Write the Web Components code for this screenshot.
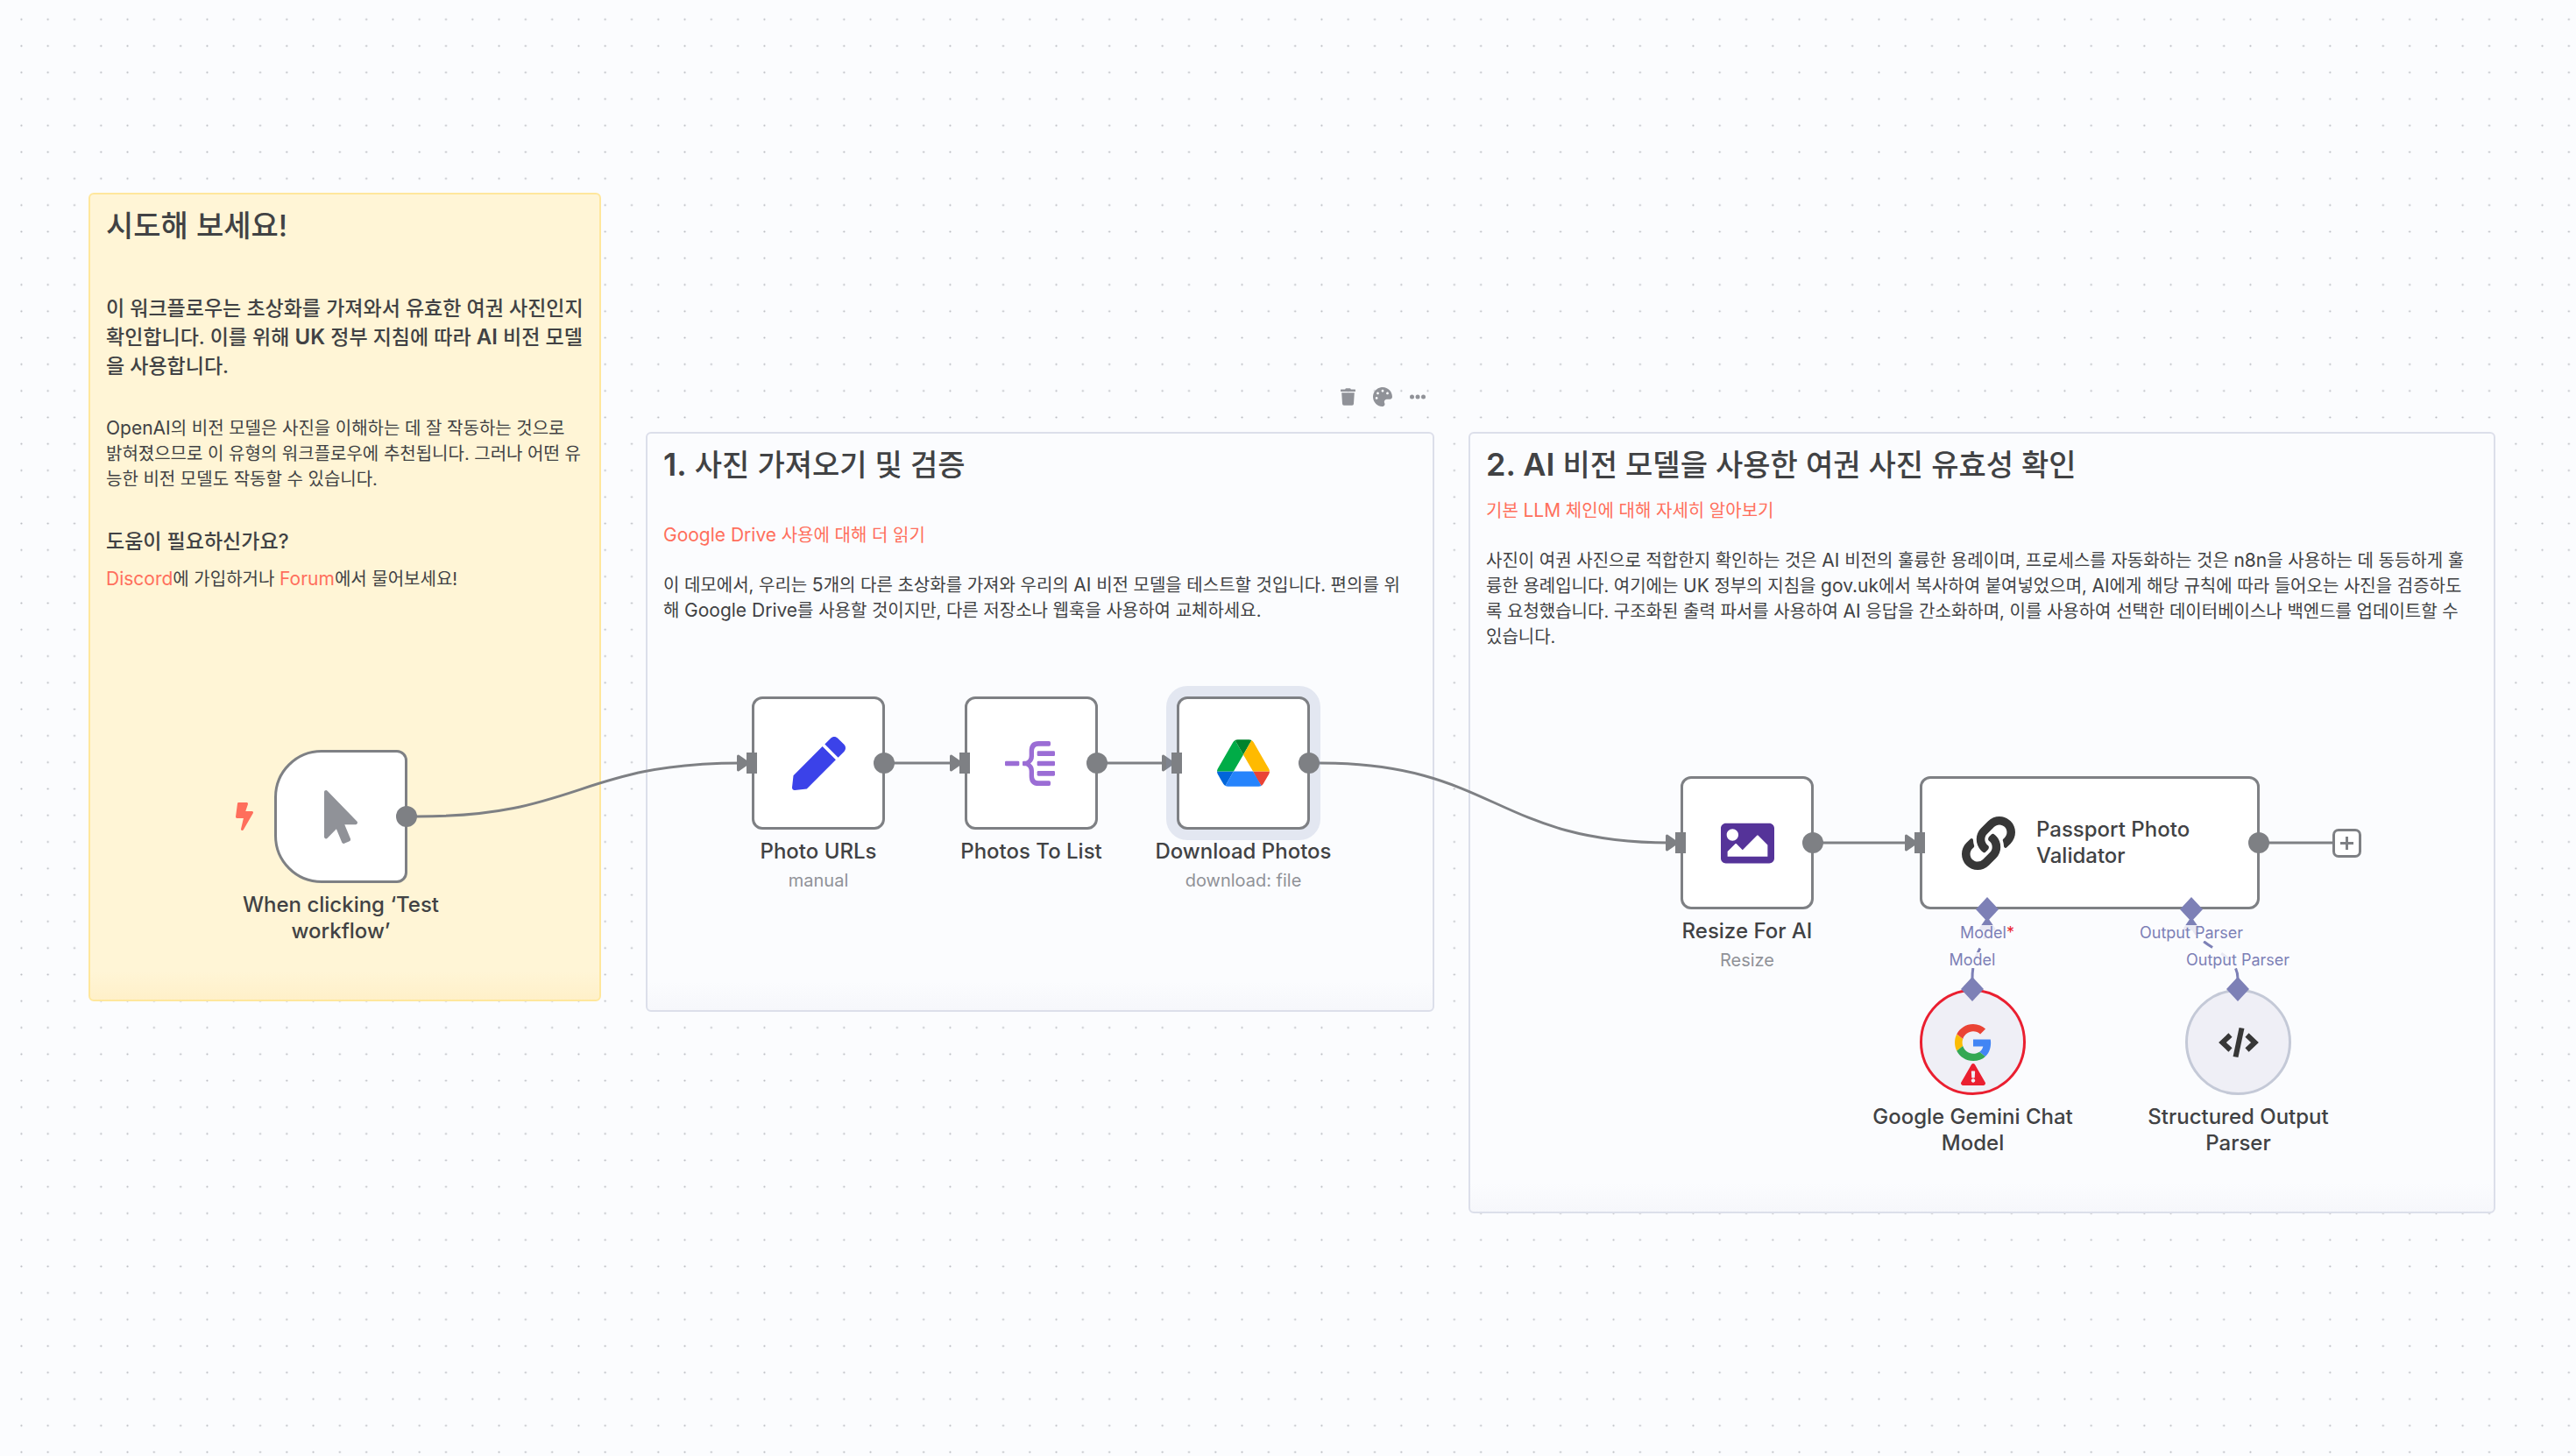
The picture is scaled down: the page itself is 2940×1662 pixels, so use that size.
<!DOCTYPE html>
<html lang="ko">
<head>
<meta charset="utf-8">
<title>Workflow</title>
<style>
  html, body { margin: 0; min-height: 100vh; }
  body {
    background: #fbfcfe;
    color: #414244;
    font-family: Inter, "Noto Sans CJK KR", sans-serif;
  }
  a { color: #ff6f5c; text-decoration: none; }
  svg { display: block; }
  /* Latin words run a size larger than the Hangul around them. */
  [lang="en"] { line-height: 1; font-size: 21px; }
  h1 [lang="en"] { font-size: 36px; font-weight: 600; }
  h4 [lang="en"] { font-size: 24px; font-weight: 600; }
</style>
</head>
<body>
<flow-canvas>
  <sticky-note color="yellow" x="101" y="220" w="585" h="923">
    <h1>시도해 보세요!</h1>
    <h4 class="far">이 워크플로우는 초상화를 가져와서 유효한 여권 사진인지<br>확인합니다. 이를 위해 <span lang="en">UK</span> 정부 지침에 따라 <span lang="en">AI</span> 비전 모델<br>을 사용합니다.</h4>
    <p class="wide"><span lang="en">OpenAI</span>의 비전 모델은 사진을 이해하는 데 잘 작동하는 것으로<br>밝혀졌으므로 이 유형의 워크플로우에 추천됩니다. 그러나 어떤 유<br>능한 비전 모델도 작동할 수 있습니다.</p>
    <h4 class="wide">도움이 필요하신가요?</h4>
    <p><a lang="en" href="#discord">Discord</a>에 가입하거나 <a lang="en" href="#forum">Forum</a>에서 물어보세요!</p>
  </sticky-note>

  <sticky-note x="737" y="493" w="900" h="662">
    <h1><span lang="en">1.</span> 사진 가져오기 및 검증</h1>
    <p class="wide"><a href="#drive"><span lang="en">Google Drive</span> 사용에 대해 더 읽기</a></p>
    <p class="mid">이 데모에서, 우리는 <span lang="en">5</span>개의 다른 초상화를 가져와 우리의 <span lang="en">AI</span> 비전 모델을 테스트할 것입니다. 편의를 위<br>해 <span lang="en">Google Drive</span>를 사용할 것이지만, 다른 저장소나 웹훅을 사용하여 교체하세요.</p>
  </sticky-note>

  <sticky-note x="1676" y="493" w="1172" h="892">
    <h1><span lang="en">2. AI</span> 비전 모델을 사용한 여권 사진 유효성 확인</h1>
    <p class="near"><a href="#chain">기본 <span lang="en">LLM</span> 체인에 대해 자세히 알아보기</a></p>
    <p class="mid">사진이 여권 사진으로 적합한지 확인하는 것은 <span lang="en">AI</span> 비전의 훌륭한 용례이며, 프로세스를 자동화하는 것은 <span lang="en">n8n</span>을 사용하는 데 동등하게 훌<br>륭한 용례입니다. 여기에는 <span lang="en">UK</span> 정부의 지침을 <span lang="en">gov.uk</span>에서 복사하여 붙여넣었으며, <span lang="en">AI</span>에게 해당 규칙에 따라 들어오는 사진을 검증하도<br>록 요청했습니다. 구조화된 출력 파서를 사용하여 <span lang="en">AI</span> 응답을 간소화하며, 이를 사용하여 선택한 데이터베이스나 백엔드를 업데이트할 수<br>있습니다.</p>
  </sticky-note>

  <note-toolbar x="1524" y="438"></note-toolbar>

  <flow-edges></flow-edges>

  <flow-node shape="trigger" x="313" y="856" label="When clicking ‘Test workflow’" output>
    <svg width="38" height="61" viewBox="0 0 320 512"><path fill="#909298" d="M302.189 329.126H196.105l55.831 135.993c3.889 9.428-.555 19.999-9.444 23.999l-49.165 21.427c-9.165 4-19.443-.571-23.332-9.714l-53.053-129.136-86.664 89.138C18.729 472.71 0 463.554 0 447.977V18.299C0 1.899 19.921-6.096 30.277 5.443l284.412 292.542c11.472 11.179 3.007 31.141-12.5 31.141z"/></svg>
  </flow-node>

  <flow-node x="858" y="795" label="Photo URLs" sub="manual" input output>
    <svg width="61" height="61" viewBox="0 0 512 512"><path fill="#3b42e9" d="M290.74 93.24l128.02 128.02-277.99 277.99-114.14 12.6C11.35 513.54-1.56 500.62.14 485.34l12.7-114.22 277.9-277.88zm207.2-19.06l-60.11-60.11c-18.75-18.75-49.16-18.75-67.91 0l-56.55 56.55 128.02 128.02 56.55-56.55c18.75-18.76 18.75-49.16 0-67.91z"/></svg>
  </flow-node>

  <flow-node x="1101" y="795" label="Photos To List" input output>
    <svg width="61" height="51" viewBox="0 0 183 153">
      <g fill="#9b6dd5"><rect x="0" y="68" width="49" height="17" rx="4"/><rect x="110" y="34" width="61" height="17" rx="4"/><rect x="110" y="68" width="61" height="17" rx="4"/><rect x="110" y="102" width="61" height="17" rx="4"/>
      <path d="M64 68h8q11-5 11-18V34Q83 0 115 0h36q5 0 5 5v7q0 5-5 5h-36Q99 17 99 34v18q0 15-12 24.500q12 9.500 12 24.500v18q0 17 16 17h36q5 0 5 5v7q0 5-5 5h-36Q83 153 83 119v-16q0-13-11-18h-8q-4 0-4-4v-9q0-4 4-4z"/></g>
    </svg>
  </flow-node>

  <flow-node selected x="1343" y="795" label="Download Photos" sub="download: file" input output>
    <svg width="60" height="54" viewBox="0 0 87.3 78">
      <path fill="#0066da" d="m6.6 66.85 3.85 6.65c.8 1.4 1.95 2.5 3.3 3.3l13.75-23.8h-27.5c0 1.55.4 3.1 1.2 4.5z"/>
      <path fill="#00ac47" d="m43.65 25-13.75-23.8c-1.35.8-2.5 1.9-3.3 3.3l-25.4 44a9.06 9.06 0 0 0-1.2 4.5h27.5z"/>
      <path fill="#ea4335" d="m73.55 76.8c1.35-.8 2.5-1.9 3.3-3.3l1.6-2.75 7.65-13.25c.8-1.4 1.2-2.95 1.2-4.5h-27.502l5.852 11.5z"/>
      <path fill="#00832d" d="m43.65 25 13.75-23.8c-1.35-.8-2.9-1.2-4.5-1.2h-18.5c-1.6 0-3.15.45-4.500 1.2z"/>
      <path fill="#2684fc" d="m59.8 53h-32.3l-13.75 23.8c1.35.8 2.9 1.2 4.5 1.2h50.8c1.6 0 3.15-.45 4.5-1.2z"/>
      <path fill="#ffba00" d="m73.4 26.5-12.7-22c-.8-1.4-1.95-2.5-3.3-3.3l-13.75 23.8 16.15 28h27.45c0-1.55-.4-3.1-1.2-4.5z"/>
    </svg>
  </flow-node>

  <flow-node x="1918" y="886" label="Resize For AI" sub="Resize" input output>
    <svg width="61" height="61" viewBox="0 0 512 512"><path fill="#553399" d="M464 448H48c-26.51 0-48-21.49-48-48V112c0-26.51 21.49-48 48-48h416c26.51 0 48 21.49 48 48v288c0 26.51-21.49 48-48 48zM112 120c-30.928 0-56 25.072-56 56s25.072 56 56 56 56-25.072 56-56-25.072-56-56-56zM64 384h384V272l-87.515-87.515c-4.686-4.686-12.284-4.686-16.971 0L208 320l-55.515-55.515c-4.686-4.686-12.284-4.686-16.971 0L64 336v48z"/></svg>
  </flow-node>

  <flow-node shape="wide" x="2191" y="886" label="Passport Photo Validator" input output>
    <svg width="61" height="61" viewBox="0 0 512 512"><path fill="#373737" d="M326.612 185.391c59.747 59.809 58.927 155.698.36 214.59-.11.12-.24.25-.36.37l-67.2 67.2c-59.27 59.27-155.699 59.262-214.96 0-59.27-59.26-59.27-155.7 0-214.96l37.106-37.106c9.84-9.84 26.786-3.3 27.294 10.606.648 17.722 3.826 35.527 9.69 52.721 1.986 5.822.567 12.262-3.783 16.612l-13.087 13.087c-28.026 28.026-28.905 73.66-1.155 101.96 28.024 28.579 74.086 28.749 102.325.51l67.2-67.19c28.191-28.191 28.073-73.757 0-101.83-3.701-3.694-7.429-6.564-10.341-8.569a16.037 16.037 0 0 1-6.947-12.606c-.396-10.567 3.348-21.456 11.698-29.806l21.054-21.055c5.521-5.521 14.182-6.199 20.584-1.731a152.482 152.482 0 0 1 20.522 17.197zM467.547 44.449c-59.261-59.262-155.69-59.27-214.96 0l-67.2 67.2c-.12.12-.25.25-.36.37-58.566 58.892-59.387 154.781.36 214.59a152.454 152.454 0 0 0 20.521 17.196c6.402 4.468 15.064 3.789 20.584-1.731l21.054-21.055c8.35-8.35 12.094-19.239 11.698-29.806a16.037 16.037 0 0 0-6.947-12.606c-2.912-2.005-6.64-4.875-10.341-8.569-28.073-28.073-28.191-73.639 0-101.83l67.2-67.19c28.239-28.239 74.3-28.069 102.325.51 27.75 28.3 26.872 73.934-1.155 101.96l-13.087 13.087c-4.35 4.35-5.769 10.79-3.783 16.612 5.864 17.194 9.042 34.999 9.69 52.721.509 13.906 17.454 20.446 27.294 10.606l37.106-37.106c59.271-59.259 59.271-155.699.001-214.959z"/></svg>
  </flow-node>

  <flow-node shape="round" error x="2191" y="1129" label="Google Gemini Chat Model">
    <svg width="42" height="42" viewBox="0 0 48 48">
      <path fill="#EA4335" d="M24 9.5c3.54 0 6.71 1.22 9.21 3.6l6.85-6.85C35.9 2.38 30.47 0 24 0 14.62 0 6.51 5.38 2.56 13.22l7.98 6.19C12.43 13.72 17.74 9.5 24 9.5z"/>
      <path fill="#4285F4" d="M46.98 24.55c0-1.57-.15-3.09-.38-4.55H24v9.02h12.94c-.58 2.96-2.26 5.48-4.78 7.18l7.73 6c4.51-4.18 7.09-10.36 7.09-17.65z"/>
      <path fill="#FBBC05" d="M10.53 28.59c-.48-1.45-.76-2.99-.76-4.59s.27-3.14.76-4.59l-7.98-6.19C.92 16.46 0 20.12 0 24c0 3.88.92 7.54 2.56 10.78l7.97-6.19z"/>
      <path fill="#34A853" d="M24 48c6.48 0 11.93-2.13 15.89-5.81l-7.73-6c-2.15 1.45-4.92 2.3-8.16 2.3-6.26 0-11.57-4.22-13.47-9.91l-7.98 6.19C6.51 42.62 14.62 48 24 48z"/>
    </svg>
  </flow-node>

  <flow-node shape="round" x="2494" y="1129" label="Structured Output Parser">
    <svg width="46" height="36" viewBox="0 0 46 36"><g fill="none" stroke="#373737" stroke-width="6" stroke-linejoin="miter"><path d="M13.500 9.500 4.500 18l9 8.500"/><path d="M26.500 1.500 19.500 34.500" stroke-linecap="butt"/><path d="M32.500 9.500l9 8.500-9 8.500"/></g></svg>
  </flow-node>

  <port-handle x="2268" y="1038" label="Model" required></port-handle>
  <port-handle x="2501" y="1038" label="Output Parser"></port-handle>
  <port-handle side="top" x="2251" y="1129" label="Model"></port-handle>
  <port-handle side="top" x="2554" y="1129" label="Output Parser"></port-handle>

  <add-button x="2662" y="946"></add-button>
</flow-canvas>

<script>
  /* Base for everything that sits at a free position on the canvas. */
  class CanvasItem extends HTMLElement {
    connectedCallback() {
      this.style.left = this.getAttribute('x') + 'px';
      this.style.top = this.getAttribute('y') + 'px';
      if (!this.shadowRoot) {
        this.attachShadow({ mode: 'open' }).innerHTML =
          '<style>:host{position:absolute;display:block}</style>' + this.render();
      }
    }
    render() { return '<slot></slot>'; }
  }

  customElements.define('flow-canvas', class extends HTMLElement {
    constructor() {
      super();
      this.attachShadow({ mode: 'open' }).innerHTML = `
        <style>
          :host { display: block; position: relative; min-height: 100vh; overflow: hidden; }
          .grid { position: absolute; inset: 0; width: 100%; height: 100%; }
        </style>
        <svg class="grid" aria-hidden="true">
          <pattern id="dots" width="20" height="20" patternUnits="userSpaceOnUse" patternTransform="translate(9.300 7) scale(1.5143)">
            <circle cx="10" cy="10" r="0.700" fill="#b4b6bc"/>
          </pattern>
          <rect width="100%" height="100%" fill="url(#dots)"/>
        </svg>
        <slot></slot>`;
    }
  });

  customElements.define('sticky-note', class extends CanvasItem {
    render() {
      this.style.width = this.getAttribute('w') + 'px';
      this.style.minHeight = this.getAttribute('h') + 'px';
      return `
        <style>
          :host {
            box-sizing: border-box; padding: 14px 18px;
            border: 2px solid #dcdfea; border-radius: 6px;
            background: linear-gradient(to top, #f6f7fb, #fbfcfe 32px);
            white-space: nowrap;
          }
          :host([color="yellow"]) {
            border-color: #ffe79c;
            background: linear-gradient(to top, #fff0c9, #fff5d6 32px);
          }
          ::slotted(h1) { margin: 0; font-size: 34px; line-height: 44px; font-weight: 500; }
          ::slotted(h4) { margin: 0; font-size: 23px; line-height: 33px; font-weight: 500; }
          ::slotted(p) { margin: 12px 0 0; font-size: 20px; line-height: 29px; }
          ::slotted(.near) { margin-top: 16px; }
          ::slotted(.mid) { margin-top: 28px; }
          ::slotted(.wide) { margin-top: 40px; }
          ::slotted(p.wide:nth-child(2)) { margin-top: 44px; }
          ::slotted(.far) { margin-top: 56px; }
        </style>
        <slot></slot>`;
    }
  });

  customElements.define('note-toolbar', class extends CanvasItem {
    render() {
      return `
        <style>
          :host { display: flex; gap: 12px; }
          button {
            display: grid; place-items: center; width: 28px; height: 30px;
            padding: 0; border: 0; background: none; color: #909298; cursor: pointer;
          }
        </style>
        <button aria-label="Delete"><svg width="17" height="20" viewBox="0 0 448 512" fill="currentColor"><path d="M432 32H312l-9.400-18.700A24 24 0 0 0 281.100 0H166.800a23.720 23.720 0 0 0-21.400 13.300L136 32H16A16 16 0 0 0 0 48v32a16 16 0 0 0 16 16h416a16 16 0 0 0 16-16V48a16 16 0 0 0-16-16zM32 128l21.200 339a48 48 0 0 0 47.900 45h245.800a48 48 0 0 0 47.900-45L416 128z"/></svg></button>
        <button aria-label="Color"><svg width="22" height="22" viewBox="0 0 512 512" fill="currentColor"><path d="M204.300 5C104.900 24.400 24.800 104.300 5.200 203.400c-37 187 131.700 326.400 258.800 306.700 41.200-6.400 61.400-54.600 42.500-91.700-23.100-45.400 9.900-98.400 60.900-98.400h79.700c35.800 0 64.800-29.600 64.900-65.300C511.500 97.100 368.100-26.900 204.300 5zM96 320c-17.700 0-32-14.300-32-32s14.300-32 32-32 32 14.300 32 32-14.300 32-32 32zm32-128c-17.700 0-32-14.300-32-32s14.300-32 32-32 32 14.300 32 32-14.300 32-32 32zm128-64c-17.700 0-32-14.300-32-32s14.300-32 32-32 32 14.300 32 32-14.300 32-32 32zm128 64c-17.700 0-32-14.300-32-32s14.300-32 32-32 32 14.300 32 32-14.300 32-32 32z"/></svg></button>
        <button aria-label="More"><svg width="18" height="6" viewBox="0 0 18 6" fill="currentColor"><circle cx="2.500" cy="3" r="2.500"/><circle cx="9" cy="3" r="2.500"/><circle cx="15.500" cy="3" r="2.500"/></svg></button>`;
    }
  });

  customElements.define('flow-edges', class extends HTMLElement {
    constructor() {
      super();
      this.attachShadow({ mode: 'open' }).innerHTML = `
        <style>
          :host { position: absolute; inset: 0; pointer-events: none; }
          svg { width: 100%; height: 100%; }
        </style>
        <svg aria-hidden="true">
          <defs><path id="arrow" d="M1.500-8 13 0 1.500 8z" stroke-width="3" stroke-linejoin="round"/></defs>
          <g fill="none" stroke="#7e8084" stroke-width="3">
            <path d="M465 932h12C661 932 661 871 846 871"/>
            <path d="M1010 871h76"/>
            <path d="M1253 871h76"/>
            <path d="M1494 871h12C1706 871 1706 962 1906 962"/>
            <path d="M2070 962h104"/>
            <path d="M2579 962h84"/>
          </g>
          <g fill="#7e8084" stroke="#7e8084">
            <use href="#arrow" x="841" y="871"/>
            <use href="#arrow" x="1084" y="871"/>
            <use href="#arrow" x="1326" y="871"/>
            <use href="#arrow" x="1901" y="962"/>
            <use href="#arrow" x="2174" y="962"/>
          </g>
          <g fill="none" stroke="#7d80b6" stroke-width="3" stroke-dasharray="12 12">
            <path d="M2251 1117C2251 1083 2268 1083 2268 1050"/>
            <path d="M2554 1117C2554 1083 2501 1083 2501 1050"/>
          </g>
          <g fill="#7d80b6" stroke="#7d80b6">
            <use href="#arrow" transform="translate(2268 1062) rotate(-90)"/>
            <use href="#arrow" transform="translate(2501 1062) rotate(-90)"/>
          </g>
        </svg>`;
    }
  });

  customElements.define('flow-node', class extends CanvasItem {
    render() {
      const has = n => this.hasAttribute(n);
      const shape = this.getAttribute('shape');
      const name = `<span class="name">${this.getAttribute('label')}</span>`;
      const sub = has('sub') ? `<span class="sub">${this.getAttribute('sub')}</span>` : '';
      return `
        <style>
          :host { display: flex; flex-direction: column; align-items: center; width: 152px; }
          .box {
            position: relative; box-sizing: border-box; width: 100%; height: 152px;
            display: flex; align-items: center; justify-content: center;
            border: 3px solid #7e8084; border-radius: 12px; background: #fff;
          }
          .name { width: 242px; margin-top: 10px; text-align: center; font-size: 24px; line-height: 30px; font-weight: 500; }
          .sub { margin-top: 6px; font-size: 20px; line-height: 24px; color: #909298; }
          :host([selected]) .box { box-shadow: 0 0 0 12px rgba(136, 152, 189, .2); }
          :host([shape="trigger"]) .box { border-radius: 54px 12px 12px 54px; }
          :host([shape="wide"]) { width: 388px; }
          :host([shape="wide"]) .box { justify-content: flex-start; gap: 24px; padding: 0 45px; }
          :host([shape="wide"]) .name { width: 200px; margin: 0; text-align: left; }
          :host([shape="round"]) { width: 121px; }
          :host([shape="round"]) .box { height: 121px; border-radius: 50%; border-color: #c4c9d7; background: #efeff6; }
          :host([error]) .box { border-color: #ea1f30; }
          .in, .out { position: absolute; background: #7e8084; top: 61px; height: 24px; }
          .in { left: -9px; width: 12px; }
          .out { right: -14px; width: 24px; border-radius: 50%; }
          .bolt { position: absolute; left: -47px; top: 57px; }
          .warn { position: absolute; left: 44px; top: 82px; }
        </style>
        <div class="box">
          <slot></slot>
          ${shape === 'wide' ? name : ''}
          ${has('input') ? '<i class="in"></i>' : ''}
          ${has('output') ? '<i class="out"></i>' : ''}
          ${shape === 'trigger' ? '<svg class="bolt" width="20" height="32" viewBox="0 0 320 512"><path fill="#ff6f5c" d="M296 160H180.600l42.600-129.800C227.200 15 215.700 0 200 0H56C44 0 33.800 8.900 32.200 20.800l-32 240C-1.700 275.200 9.500 288 24 288h118.700L96.600 482.500c-3.600 15.200 8 29.500 23.300 29.500 8.400 0 16.400-4.400 20.800-12l176-304c9.300-15.900-2.200-36-20.700-36z"/></svg>' : ''}
          ${has('error') ? '<svg class="warn" width="28" height="25" viewBox="0 0 576 512"><path fill="#ea1f30" d="M569.517 440.013C587.975 472.007 564.806 512 527.940 512H48.054c-36.937 0-59.999-40.055-41.577-71.987L246.423 23.985c18.467-32.009 64.720-31.951 83.154 0l239.940 416.028zM288 354c-25.405 0-46 20.595-46 46s20.595 46 46 46 46-20.595 46-46-20.595-46-46-46zm-43.673-165.346l7.418 136c.347 6.364 5.609 11.346 11.982 11.346h48.546c6.373 0 11.635-4.982 11.982-11.346l7.418-136c.375-6.874-5.098-12.654-11.982-12.654h-63.383c-6.884 0-12.356 5.780-11.981 12.654z"/></svg>' : ''}
        </div>
        ${shape === 'wide' ? '' : name + sub}`;
    }
  });

  customElements.define('port-handle', class extends CanvasItem {
    render() {
      return `
        <style>
          :host { display: flex; flex-direction: column; align-items: center; width: 0; height: 0; }
          svg { flex: none; margin-top: -14px; position: relative; z-index: 1; }
          span {
            flex: none; margin-top: 4px; white-space: nowrap; font-size: 18px; line-height: 18px;
            color: #7d80b6; background: rgba(251, 252, 254, .85);
          }
          b { font-weight: 400; color: #ea1f30; }
          :host([side="top"]) { flex-direction: column-reverse; }
          :host([side="top"]) svg { margin: 0 0 -14px; }
          :host([side="top"]) span { margin: 0 0 10px; }
        </style>
        <svg width="28" height="28" viewBox="0 0 28 28" aria-hidden="true"><path fill="#7d80b6" d="M14 0 27 14 14 28 1 14z"/></svg>
        <span>${this.getAttribute('label')}${this.hasAttribute('required') ? '<b>*</b>' : ''}</span>`;
    }
  });

  customElements.define('add-button', class extends CanvasItem {
    render() {
      return `
        <style>
          button {
            display: grid; place-items: center; box-sizing: border-box; width: 33px; height: 33px;
            padding: 0; border: 3px solid #7e8084; border-radius: 7px; background: #fff; cursor: pointer;
          }
        </style>
        <button aria-label="Add node"><svg width="15" height="15" viewBox="0 0 15 15"><path d="M7.500 0v15M0 7.500h15" stroke="#7e8084" stroke-width="3"/></svg></button>`;
    }
  });
</script>
</body>
</html>
